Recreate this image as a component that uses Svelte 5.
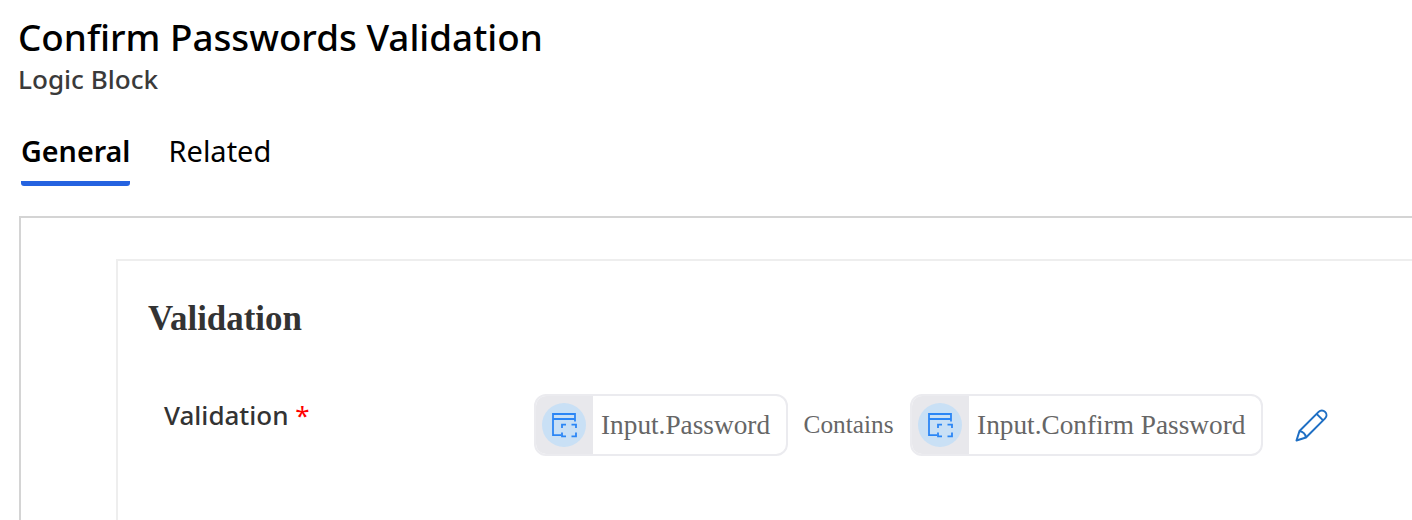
<script>
  const tabs = [
    { label: 'General', active: true },
    { label: 'Related', active: false }
  ];
</script>

<div class="page">
  <header class="head">
    <h1>Confirm Passwords Validation</h1>
    <p class="sub">Logic Block</p>
  </header>

  <nav class="tabs">
    {#each tabs as t}
      <div class="tab" class:active={t.active}>{t.label}</div>
    {/each}
  </nav>

  <section class="outer">
    <div class="inner">
      <h2>Validation</h2>
      <div class="row">
        <div class="label">Validation <span class="req">*</span></div>
        <div class="expr">
          {@render chip('Input.Password')}
          <span class="op">Contains</span>
          {@render chip('Input.Confirm Password')}
          <button class="edit" aria-label="Edit">
            <svg width="34" height="34" viewBox="0 0 34 34" fill="none" stroke="#1f6fc4" stroke-width="2" stroke-linejoin="round">
              <path d="M1.5 32.5 L4.5 23 L23.6 3.9 A3.6 3.6 0 0 1 30.1 10.4 L11 29.5 Z" />
              <path d="M4.5 23 Q10 24 11 29.5" />
              <path d="M21.6 5.9 L28.1 12.4" />
            </svg>
          </button>
        </div>
      </div>
    </div>
  </section>
</div>

{#snippet chip(text)}
  <div class="chip">
    <div class="chip-ic">
      <span class="circle">
        <svg width="26" height="26" viewBox="0 0 26 26" fill="none" stroke="#2b86f5" stroke-width="1.8">
          <path d="M10 23.2 H2 V2 H24 V9.5" />
          <path d="M2 7 H24" />
          <path d="M11 16 V12.6 H15 M20.5 12.6 H25 V16 M25 20.5 V24.3 H20.5 M15 24.3 H11 V20.5" />
        </svg>
      </span>
    </div>
    <span class="chip-text">{text}</span>
  </div>
{/snippet}

<style>
  :global(body) {
    margin: 0;
    background: #fff;
  }
  .page {
    width: 1412px;
    height: 520px;
    overflow: hidden;
    box-sizing: border-box;
    padding: 14px 0 0 18px;
    font-family: "Noto Sans", "Open Sans", sans-serif;
  }
  h1 {
    margin: 0;
    font-size: 36.8px;
    line-height: 46px;
    font-weight: 500;
    color: #000;
  }
  .sub {
    margin: 3px 0 0;
    font-size: 26.1px;
    line-height: 32px;
    font-weight: 500;
    color: #3a3a3a;
  }
  .tabs {
    display: flex;
    gap: 38px;
    margin: 35px 0 0 3px;
  }
  .tab {
    font-size: 29px;
    line-height: 38px;
    color: #000;
    padding: 2px 0 11px;
    border-bottom: 5px solid transparent;
  }
  .tab.active {
    font-size: 28.7px;
    font-weight: 600;
    border-bottom-color: #2563e0;
    border-radius: 3px;
  }
  .outer {
    margin: 30px -40px 0 1px;
    border: 2px solid #d4d4d4;
    border-right: 0;
    padding: 41px 0 0 95px;
    height: 400px;
  }
  .inner {
    border: 2px solid #eee;
    border-right: 0;
    padding: 37px 0 0 30px;
    height: 400px;
  }
  h2 {
    margin: 0;
    font-family: "Liberation Serif", serif;
    font-size: 34.9px;
    line-height: 42px;
    font-weight: 700;
    color: #333;
  }
  .row {
    display: flex;
    margin-top: 54px;
  }
  .label {
    width: 386px;
    padding-left: 16px;
    box-sizing: border-box;
    font-size: 26px;
    line-height: 32px;
    font-weight: 500;
    color: #333;
    margin-top: 5px;
  }
  .req {
    color: #f00;
    font-weight: 400;
  }
  .expr {
    display: flex;
    align-items: center;
  }
  .chip {
    display: flex;
    align-items: stretch;
    height: 62px;
    box-sizing: border-box;
    border: 2px solid #ebebef;
    border-radius: 12px;
    overflow: hidden;
    background: #fff;
    font-family: "Liberation Serif", serif;
    font-size: 27.3px;
    color: #666;
  }
  .chip-ic {
    width: 57px;
    background: #e8e8ec;
    display: flex;
    align-items: center;
    padding-left: 6px;
    box-sizing: border-box;
  }
  .circle {
    width: 44px;
    height: 44px;
    border-radius: 50%;
    background: #c9e0f5;
    display: flex;
    align-items: center;
    justify-content: center;
  }
  .chip-text {
    padding: 0 16px 0 8px;
    line-height: 58px;
  }
  .op {
    font-family: "Liberation Serif", serif;
    font-size: 25.3px;
    color: #666;
    padding: 0 16.5px 0 15.5px;
    position: relative;
    top: -1px;
  }
  .edit {
    margin-left: 32px;
    padding: 0;
    border: 0;
    background: none;
    display: flex;
  }
</style>
